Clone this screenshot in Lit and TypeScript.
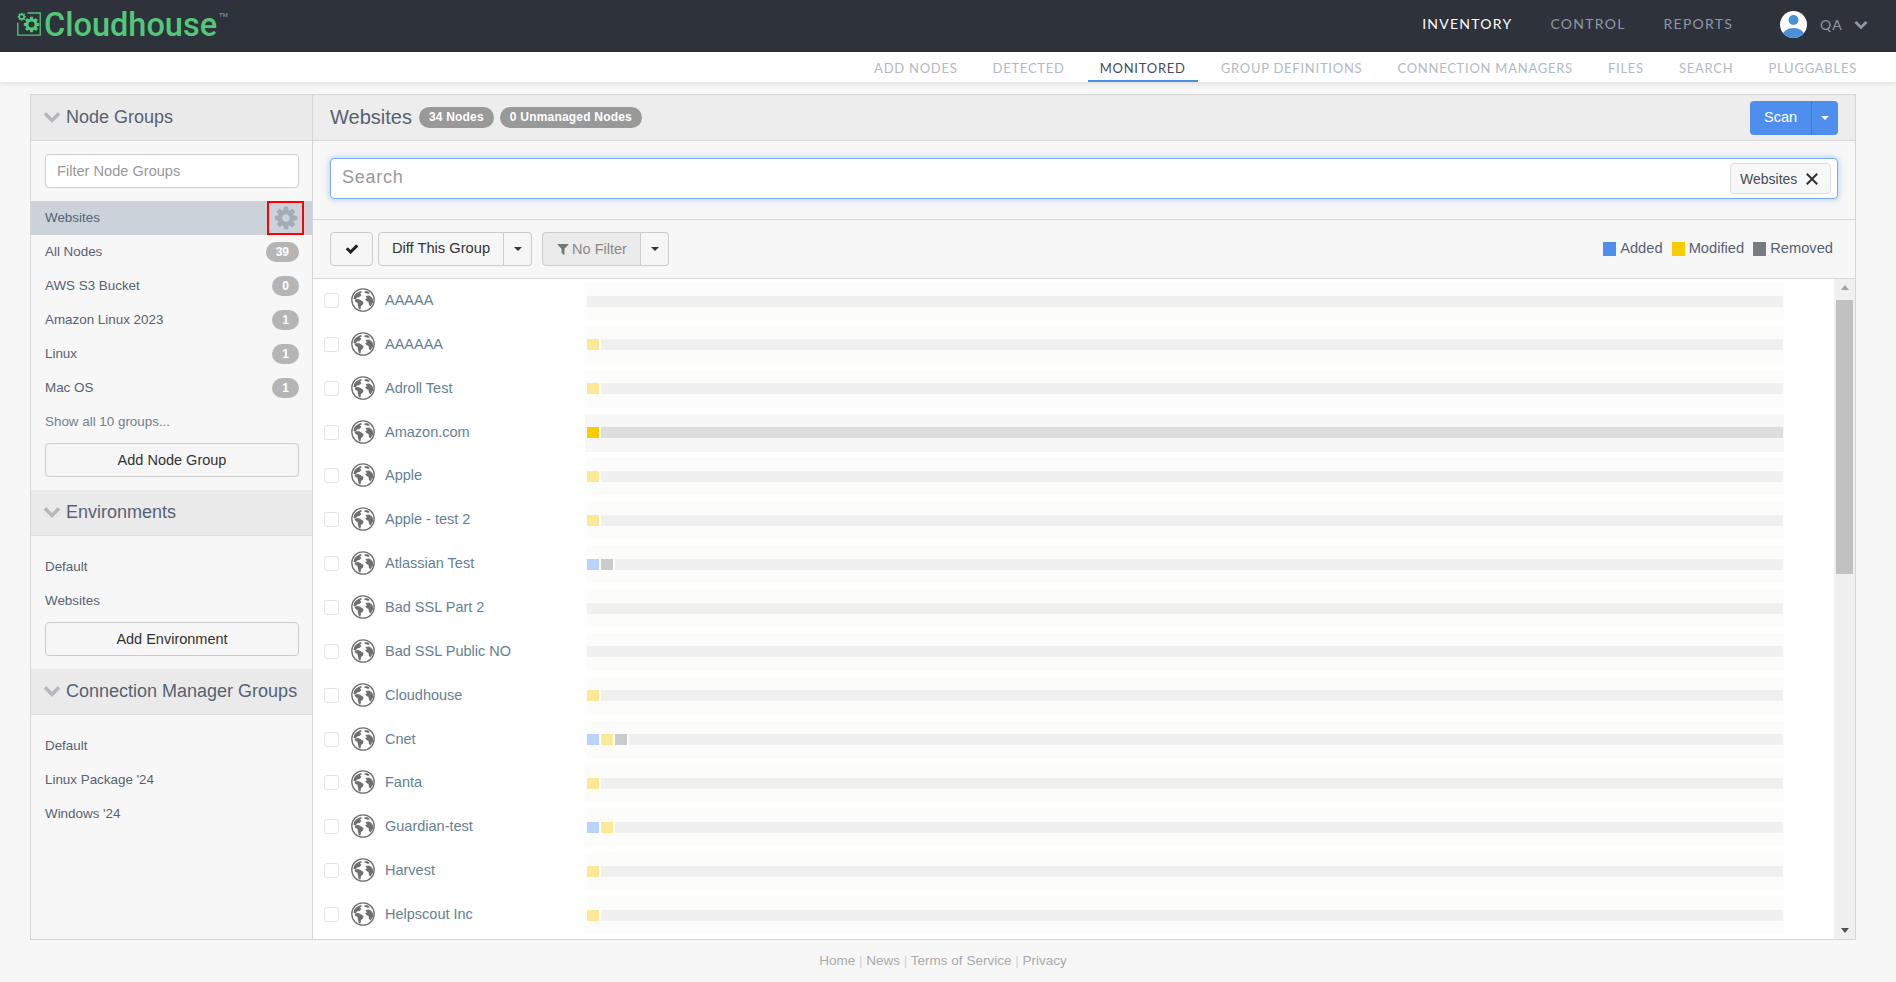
import { LitElement, html, css } from "lit";
import { customElement } from "lit/decorators.js";

const COG = "M1152 896q0-106-75-181t-181-75-181 75-75 181 75 181 181 75 181-75 75-181zm512-109v222q0 12-8 23t-20 13l-185 28q-19 54-39 91 35 50 107 138 10 12 10 25t-9 23q-27 37-99 108t-94 71q-12 0-26-9l-138-108q-44 23-91 38-16 136-29 186-7 28-36 28h-222q-14 0-24.5-8.5t-11.5-21.5l-28-184q-49-16-90-37l-141 107q-10 9-25 9-14 0-25-11-126-114-165-168-7-10-7-23 0-12 8-23 15-21 51-66.5t54-70.5q-27-50-41-99l-183-27q-13-2-21-12.5t-8-23.5v-222q0-12 8-23t19-13l186-28q14-46 39-92-40-57-107-138-10-12-10-24 0-10 9-23 26-36 98.5-107.5t94.5-71.5q13 0 26 10l138 107q44-23 91-38 16-136 29-186 7-28 36-28h222q14 0 24.5 8.5t11.5 21.5l28 184q49 16 90 37l142-107q9-9 24-9 13 0 25 10 129 119 165 170 7 8 7 22 0 12-8 23-15 21-51 66.5t-54 70.5q26 50 41 98l183 28q13 2 21 12.5t8 23.5z";
const CHEV = "M1683 808l-742 741q-19 19-45 19t-45-19l-742-741q-19-19-19-45.5t19-45.5l166-165q19-19 45-19t45 19l531 531 531-531q19-19 45-19t45 19l166 165q19 19 19 45.5t-19 45.5z";
const CHECK = "M1671 566q0 40-28 68l-724 724-136 136q-28 28-68 28t-68-28l-136-136-362-362q-28-28-28-68t28-68l136-136q28-28 68-28t68 28l294 295 656-657q28-28 68-28t68 28l136 136q28 28 28 68z";
const FILTER = "M1595 295q17 41-14 70l-493 493v742q0 42-39 59-13 5-25 5-27 0-45-19l-256-256q-19-19-19-45v-486l-493-493q-31-29-14-70 17-39 59-39h1280q42 0 59 39z";

const fa = (d: string, cls: string) =>
  html`<svg class=${cls} viewBox="0 0 1792 1792"><path d=${d} fill="currentColor"></path></svg>`;

const globe = html`<svg class="globe" viewBox="0 0 24 24">
  <circle cx="12" cy="12" r="11.2" fill="#fff" stroke="#6f6f6f" stroke-width="1.3"></circle>
  <path fill="#6f6f6f" d="M5 5.5 9.5 3 11 4 9 5.5 10.5 7 8.5 9 6 9.5 5 11 2.5 11 3 8zM3.5 11.5 7 11 9.5 12 12.5 14 12 16.5 10 18 9.5 21.5 8 21.5 7 18 6.5 15 4 13.5z"></path>
  <path fill="#6f6f6f" d="M13.5 3.5 16 3 19 5 17 6 15 5 13.5 5zM14.5 8 18 7.5 20.5 9 22 11.5 22.5 14 21 16 19.5 18.5 18 17 17.5 14 15.5 13 14 11 16 10.5z"></path>
</svg>`;

type Seg = "a" | "m" | "r";
interface Row { n: string; segs: Seg[]; hi?: boolean }
const ROWS: Row[] = [
  { n: "AAAAA", segs: [] },
  { n: "AAAAAA", segs: ["m"] },
  { n: "Adroll Test", segs: ["m"] },
  { n: "Amazon.com", segs: ["m"], hi: true },
  { n: "Apple", segs: ["m"] },
  { n: "Apple - test 2", segs: ["m"] },
  { n: "Atlassian Test", segs: ["a", "r"] },
  { n: "Bad SSL Part 2", segs: [] },
  { n: "Bad SSL Public NO", segs: [] },
  { n: "Cloudhouse", segs: ["m"] },
  { n: "Cnet", segs: ["a", "m", "r"] },
  { n: "Fanta", segs: ["m"] },
  { n: "Guardian-test", segs: ["a", "m"] },
  { n: "Harvest", segs: ["m"] },
  { n: "Helpscout Inc", segs: ["m"] },
];

@customElement("app-root")
export class AppRoot extends LitElement {
  static styles = css`
    :host { display: block; height: 982px; overflow: hidden; background: #f7f7f7; font-family: "Liberation Sans", Arial, sans-serif; color: #566272; font-size: 14px; }
    * { box-sizing: border-box; }
    .top { height: 52px; background: #2d323b; display: flex; align-items: center; padding: 0 28px 0 17px; }
    .logo { display: flex; align-items: flex-start; color: #52c878; flex: 1; align-self: stretch; }
    .logo > svg { width: 24px; height: 24px; margin-top: 12px; flex: none; }
    .logo .word { font-family: Roboto, sans-serif; font-weight: 500; font-size: 32.5px; line-height: 50px; height: 50px; margin-left: 3px; white-space: nowrap; }
    .logo .tm { font-size: 6px; line-height: 8px; margin: 11px 0 0 2px; color: #7fbf93; }
    .main-nav { display: flex; gap: 38px; font-family: Lato, sans-serif; font-size: 14px; letter-spacing: 1.25px; color: #8d99a6; margin-right: 47px; padding-bottom: 6px; }
    .main-nav .on { color: #fff; }
    .user { display: flex; align-items: center; color: #8d99a6; font-family: Lato, sans-serif; font-size: 14px; letter-spacing: 1.25px; padding-bottom: 3px; }
    .avatar { width: 27px; height: 27px; margin-right: 13px; }
    .user .ch { width: 14px; height: 14px; margin: 0 0 2px 11px; color: #8d99a6; }
    .sub { height: 30px; background: #fff; box-shadow: 0 1px 6px rgba(0,0,0,.12); display: flex; justify-content: flex-end; padding-right: 27px; font-family: Lato, sans-serif; font-size: 13px; letter-spacing: .75px; color: #b3b9c2; position: relative; }
    .sub span { padding: 0 12px; line-height: 32px; margin-left: 11px; height: 30px; }
    .sub .on { color: #444c57; border-bottom: 2px solid #4a90e2; }
    .panel { position: relative; margin: 12px 40px 0 30px; height: 846px; border: 1px solid #d6d6d6; display: flex; background: #f7f7f7; }
    .side { width: 282px; border-right: 1px solid #d6d6d6; flex: none; }
    .sec-h { height: 46px; background: #eaeaea; border-bottom: 1px solid #ddd; display: flex; align-items: center; padding-left: 12px; font-size: 18px; color: #566272; white-space: nowrap; }
    .sec-h svg { width: 18px; height: 18px; color: #b4b8bc; margin: 0 5px 4px 0; }
    .filter { padding: 13px 13px 0 14px; height: 60px; }
    .filter .inp { height: 34px; background: #fff; border: 1px solid #ccc; border-radius: 4px; color: #999; padding-left: 11px; line-height: 32px; font-size: 14.6px; }
    .item { height: 34px; display: flex; align-items: center; padding: 0 13px 2px 14px; justify-content: space-between; white-space: nowrap; font-size: 13.4px; }
    .item.sel { background: #cbd2da; position: relative; padding-right: 0; }
    .gearbox { position: absolute; right: 8px; top: 0; width: 37px; height: 34px; border: 2px solid #f00; display: flex; align-items: center; justify-content: center; color: #a3adb8; }
    .gearbox svg { width: 26px; height: 26px; flex: none; }
    .pill { background: #b5b5b5; color: #fff; font-weight: bold; font-size: 12px; border-radius: 10px; height: 20px; line-height: 20px; min-width: 27px; padding: 0 10px; text-align: center; margin-bottom: -2px; }
    .show { color: #6e7f8d; }
    .btn-wrap { padding: 4px 13px 13px 14px; }
    .wide { height: 34px; border: 1px solid #ccc; border-radius: 4px; text-align: center; line-height: 32px; color: #333; background: #f6f6f6; font-size: 14.5px; }
    .list-pad { padding-top: 14px; }
    .main { flex: 1; min-width: 0; display: flex; flex-direction: column; }
    .m-h { height: 46px; background: #ededed; border-bottom: 1px solid #d9d9d9; display: flex; align-items: center; padding: 0 17px; font-size: 20px; color: #566272; }
    .badge { background: #999; color: #fff; font-weight: bold; font-size: 12px; border-radius: 11px; height: 21px; line-height: 21px; padding: 0 10px; margin-left: 6px; letter-spacing: .2px; }
    .badge.first { margin-left: 7px; }
    .scan { margin-left: auto; display: flex; height: 34px; background: #4e8fee; color: #fff; border-radius: 4px; font-size: 14.5px; line-height: 33px; }
    .scan-l { width: 61px; text-align: center; }
    .scan-r { width: 27px; border-left: 1px solid #3d7bd6; display: flex; align-items: center; justify-content: center; }
    .caret { width: 0; height: 0; border-left: 4px solid transparent; border-right: 4px solid transparent; border-top: 4px solid currentColor; }
    .search-bar { height: 79px; border-bottom: 1px solid #d9d9d9; padding: 17px 17px 0; }
    .search { height: 41px; background: #fff; border: 1px solid #7aade9; border-radius: 4px; box-shadow: 0 0 6px rgba(102,160,233,.55); display: flex; align-items: center; justify-content: space-between; padding: 0 6px 0 11px; font-size: 18px; color: #999; letter-spacing: .75px; }
    .search-t { padding-bottom: 2px; }
    .chip { height: 31px; width: 101px; border: 1px solid #ddd; border-radius: 4px; background: #f7f7f7; display: flex; align-items: center; padding-left: 9px; color: #444c57; font-size: 14px; letter-spacing: 0; white-space: nowrap; }
    .chip svg { width: 12px; height: 12px; margin-left: 9px; flex: none; }
    .tools { height: 59px; border-bottom: 1px solid #d9d9d9; display: flex; align-items: center; padding: 0 17px; color: #333; font-size: 14.7px; }
    .tbtn { height: 34px; border: 1px solid #ccc; background: #f6f6f6; display: flex; align-items: center; justify-content: center; white-space: nowrap; }
    .tbtn.check { width: 43px; border-radius: 4px; margin-right: 5px; }
    .tbtn.check svg { width: 14px; height: 14px; color: #222; }
    .tbtn.diff { width: 126px; border-radius: 4px 0 0 4px; padding-bottom: 2px; }
    .tbtn.car { width: 28px; border-left: 0; border-radius: 0 4px 4px 0; color: #333; }
    .tbtn.nf { width: 99px; border-radius: 4px 0 0 4px; background: #ebebeb; color: #888; margin-left: 10px; font-size: 14.5px; }
    .tbtn.nf svg { width: 14px; height: 14px; margin-right: 2px; color: #777; flex: none; }
    .legend { margin-left: auto; display: flex; align-items: center; color: #566272; padding-bottom: 2px; }
    .legend i { width: 13px; height: 14px; margin: 2px 4px 0 0; display: block; }
    .legend span { margin-right: 9px; }
    .legend span:last-child { margin-right: 5px; }
    .list-wrap { flex: 1; min-height: 0; display: flex; background: #fff; }
    .list { flex: 1; min-width: 0; overflow: hidden; padding-top: 3px; }
    .row { height: 43.86px; display: flex; align-items: flex-start; font-size: 14.5px; color: #647f94; }
    .cb { width: 15px; height: 15px; border: 1px solid #e4e4e4; border-radius: 3px; margin: 11px 0 0 11px; flex: none; }
    .globe { width: 24px; height: 24px; margin: 6px 0 0 12px; flex: none; }
    .name { width: 200px; margin-left: 10px; line-height: 36px; height: 38px; flex: none; white-space: nowrap; }
    .cell { width: 1199px; height: 38px; background: #fcfcfa; padding: 0 1px 0 2px; display: flex; align-items: center; flex: none; }
    .cell.hi { background: #f7f7f7; }
    .bar { flex: 1; height: 11px; display: flex; gap: 2px; }
    .bar i { width: 12px; height: 11px; display: block; flex: none; }
    .bar b { flex: 1; background: #f0f0f0; display: block; }
    .hi .bar b { background: #dedede; }
    .a { background: #b9d2f8; } .m { background: #fce897; } .r { background: #cacbcc; }
    .hi .m { background: #f8cc00; }
    .sb { width: 21px; flex: none; background: #f0f0f0; position: relative; display: flex; flex-direction: column; align-items: center; padding: 6px 0; justify-content: space-between; }
    .tri-u { width: 0; height: 0; border-left: 4.5px solid transparent; border-right: 4.5px solid transparent; border-bottom: 5px solid #a3a3a3; }
    .tri-d { width: 0; height: 0; border-left: 4.5px solid transparent; border-right: 4.5px solid transparent; border-top: 5px solid #505050; }
    .thumb { position: absolute; left: 2px; right: 2px; top: 21px; height: 274px; background: #c1c1c1; }
    .foot { text-align: center; color: #aaa; font-size: 13.5px; padding: 13px 10px 0 0; }
    .foot em { font-style: normal; color: #cdd3da; }
  `;

  private side(items: string[]) {
    return items.map((t) => html`<div class="item">${t}</div>`);
  }

  render() {
    return html`
      <div class="top">
        <div class="logo">
          <svg viewBox="0 0 24 24" fill="none">
            <path d="M10.5 1H23.2V23.2H.8V10.5" stroke="currentColor" stroke-width="1.3"></path>
            <svg x="0" y="0" width="9.5" height="9.5" viewBox="0 0 1792 1792"><path d=${COG} fill="currentColor"></path></svg>
            <circle cx="4.75" cy="4.75" r="1.4" fill="#2d323b"></circle>
            <svg x="5.5" y="3.5" width="18" height="18" viewBox="0 0 1792 1792"><path d=${COG} fill="currentColor"></path></svg>
            <circle cx="14.5" cy="12.5" r="3" fill="#2d323b"></circle>
          </svg>
          <span class="word">Cloudhouse</span><span class="tm">TM</span>
        </div>
        <div class="main-nav"><span class="on">INVENTORY</span><span>CONTROL</span><span>REPORTS</span></div>
        <div class="user">
          <svg class="avatar" viewBox="0 0 27 27">
            <defs><clipPath id="av"><circle cx="13.5" cy="13.5" r="13.5"></circle></clipPath></defs>
            <circle cx="13.5" cy="13.5" r="13.5" fill="#fff"></circle>
            <g clip-path="url(#av)" fill="#4a90d9"><circle cx="13.5" cy="9" r="5"></circle><ellipse cx="13.5" cy="25" rx="11" ry="8"></ellipse></g>
          </svg>
          QA ${fa(CHEV, "ch")}
        </div>
      </div>
      <div class="sub">
        <span>ADD NODES</span><span>DETECTED</span><span class="on">MONITORED</span><span>GROUP DEFINITIONS</span><span>CONNECTION MANAGERS</span><span>FILES</span><span>SEARCH</span><span>PLUGGABLES</span>
      </div>
      <div class="panel">
        <div class="side">
          <div class="sec-h">${fa(CHEV, "")}Node Groups</div>
          <div class="filter"><div class="inp">Filter Node Groups</div></div>
          <div class="item sel">Websites<div class="gearbox">${fa(COG, "")}</div></div>
          ${[["All Nodes","39"],["AWS S3 Bucket","0"],["Amazon Linux 2023","1"],["Linux","1"],["Mac OS","1"]].map(([t,c]) => html`<div class="item">${t}<span class="pill">${c}</span></div>`)}
          <div class="item show">Show all 10 groups...</div>
          <div class="btn-wrap"><div class="wide">Add Node Group</div></div>
          <div class="sec-h">${fa(CHEV, "")}Environments</div>
          <div class="list-pad">${this.side(["Default", "Websites"])}</div>
          <div class="btn-wrap"><div class="wide">Add Environment</div></div>
          <div class="sec-h">${fa(CHEV, "")}Connection Manager Groups</div>
          <div class="list-pad">${this.side(["Default", "Linux Package '24", "Windows '24"])}</div>
        </div>
        <div class="main">
          <div class="m-h">Websites<span class="badge first">34 Nodes</span><span class="badge">0 Unmanaged Nodes</span>
            <div class="scan"><div class="scan-l">Scan</div><div class="scan-r"><div class="caret"></div></div></div>
          </div>
          <div class="search-bar"><div class="search"><span class="search-t">Search</span><div class="chip">Websites<svg viewBox="0 0 12 12"><path d="M.8.8l10.4 10.4M11.2.8.8 11.2" stroke="#333" stroke-width="2"></path></svg></div></div></div>
          <div class="tools">
            <div class="tbtn check">${fa(CHECK, "")}</div>
            <div class="tbtn diff">Diff This Group</div><div class="tbtn car"><div class="caret"></div></div>
            <div class="tbtn nf">${fa(FILTER, "")}No Filter</div><div class="tbtn car"><div class="caret"></div></div>
            <div class="legend"><i style="background:#4e8fee"></i><span>Added</span><i style="background:#f8cc00"></i><span>Modified</span><i style="background:#777c82"></i><span>Removed</span></div>
          </div>
          <div class="list-wrap">
            <div class="list">
              ${ROWS.map((r) => html`<div class="row">
                <div class="cb"></div>${globe}<div class="name">${r.n}</div>
                <div class="cell ${r.hi ? "hi" : ""}"><div class="bar">${r.segs.map((s) => html`<i class=${s}></i>`)}<b></b></div></div>
              </div>`)}
            </div>
            <div class="sb"><div class="tri-u"></div><div class="thumb"></div><div class="tri-d"></div></div>
          </div>
        </div>
      </div>
      <div class="foot">Home <em>|</em> News <em>|</em> Terms of Service <em>|</em> Privacy</div>
    `;
  }
}
